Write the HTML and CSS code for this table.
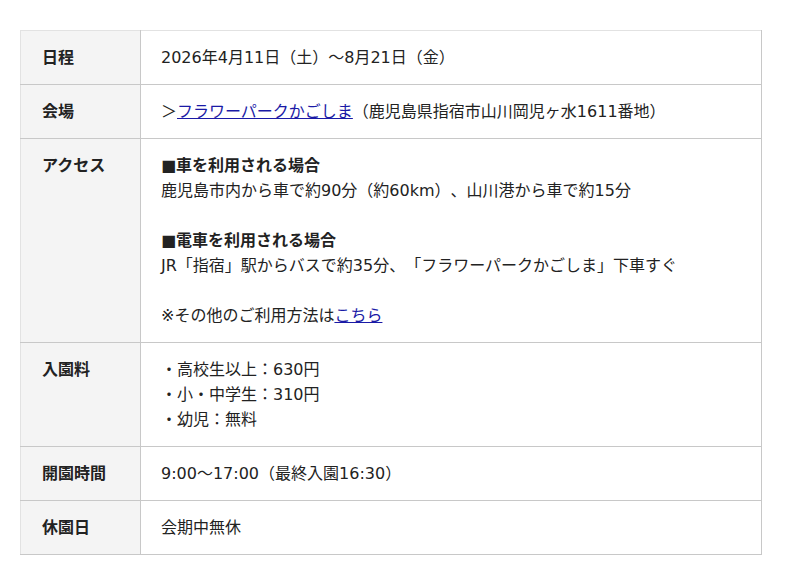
FILE: index.html
```html
<!DOCTYPE html>
<html lang="ja">
<head>
<meta charset="utf-8">
<link rel="stylesheet" href="styles.css">
</head>
<body>
<table class="info">
  <tr><th>日程</th><td>2026年4月11日（土）〜8月21日（金）</td></tr>
  <tr><th>会場</th><td>＞<a href="#">フラワーパークかごしま</a>（鹿児島県指宿市山川岡児ヶ水1611番地）</td></tr>
  <tr><th>アクセス</th><td><b>■車を利用される場合</b><br>鹿児島市内から車で約90分（約60km）、山川港から車で約15分<br><br><b>■電車を利用される場合</b><br>JR「指宿」駅からバスで約35分、「フラワーパークかごしま」下車すぐ<br><br>※その他のご利用方法は<a href="#">こちら</a></td></tr>
  <tr><th>入園料</th><td>・高校生以上：630円<br>・小・中学生：310円<br>・幼児：無料</td></tr>
  <tr><th>開園時間</th><td>9:00〜17:00（最終入園16:30）</td></tr>
  <tr><th>休園日</th><td>会期中無休</td></tr>
</table>
</body>
</html>
```
FILE: styles.css
```css
body {
  margin: 0;
  padding: 30px 20px;
  background: #fff;
  font-family: "DejaVu Sans", "Noto Sans CJK JP", sans-serif;
  font-size: 16px;
  color: #222;
  text-spacing-trim: space-all;
}
.info {
  width: 742px;
  border-collapse: collapse;
  border-top: 1px solid #e2e2e2;
  border-left: 1px solid #e2e2e2;
}
.info th, .info td {
  padding: 14px 20px;
  line-height: 25px;
  vertical-align: top;
  text-align: left;
  border-bottom: 1px solid #c8c8c8;
  border-right: 1px solid #c8c8c8;
}
.info th {
  width: 78px;
  padding-left: 21px;
  background: #f4f4f4;
  font-weight: bold;
  font-size: 16px;
}
.info td b { font-weight: bold; }
.info a {
  color: #1a1aa6;
  text-decoration: underline;
}
```
